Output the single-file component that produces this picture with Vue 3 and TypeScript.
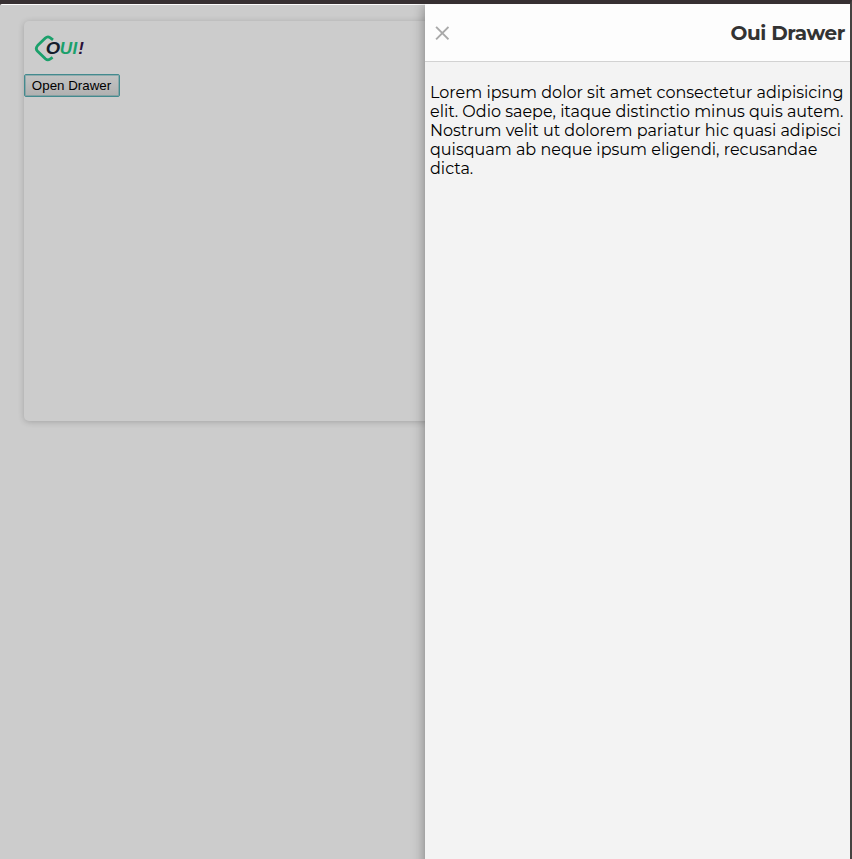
<script setup lang="ts">
import { ref } from 'vue'

const open = ref<boolean>(true)
const title: string = 'Oui Drawer'
const lines: string[] = [
  'Lorem ipsum dolor sit amet consectetur adipisicing',
  'elit. Odio saepe, itaque distinctio minus quis autem.',
  'Nostrum velit ut dolorem pariatur hic quasi adipisci',
  'quisquam ab neque ipsum eligendi, recusandae',
  'dicta.',
]
</script>

<template>
  <div class="window">
    <main class="page">
      <section class="card">
        <svg class="logo" width="54" height="28" viewBox="0 0 54 28">
          <path
            d="M19 5.8 L16 3.6 Q13.6 2 11.4 4 L3.6 11.6 Q1 14.4 3.6 17.2 L11.4 24.8 Q13.6 26.8 16 25.2 L18.6 23.4"
            fill="none"
            stroke="#1ba06b"
            stroke-width="2.8"
          />
          <text class="mark" x="11.8" y="20.2" textLength="14.4" lengthAdjust="spacingAndGlyphs" fill="#141d2b">O</text>
          <text class="mark" x="25.8" y="20.2" textLength="12.4" lengthAdjust="spacingAndGlyphs" fill="#1ba06b">U</text>
          <text class="mark" x="38.6" y="20.2" fill="#1ba06b">I</text>
          <text class="mark" x="44.2" y="20.2" fill="#2a0f38">!</text>
        </svg>
        <button class="trigger" @click="open = true">Open Drawer</button>
      </section>
    </main>
    <div v-if="open" class="overlay" @click.self="open = false">
      <aside class="drawer">
        <header class="head">
          <button class="close" aria-label="Close" @click="open = false">
            <svg width="14" height="14" viewBox="0 0 14 14">
              <path d="M1.1 0.9 L13.5 13.3 M13.5 0.9 L1.1 13.3" stroke="#a9a9a9" stroke-width="1.9" />
            </svg>
          </button>
          <h1 class="title">{{ title }}</h1>
        </header>
        <p class="body">
          <span v-for="(line, i) in lines" :key="i" class="line">{{ line }}</span>
        </p>
      </aside>
    </div>
  </div>
</template>

<style>
body {
  margin: 0;
  background: #373032;
}
</style>

<style scoped>
.window {
  position: relative;
  box-sizing: border-box;
  height: 859px;
  overflow: hidden;
  border-top: 4px solid #373032;
  border-right: 2px solid #454240;
}
.page {
  box-sizing: border-box;
  height: 855px;
  padding: 16px 24px;
  background: #cccccc;
  border-top: 1px solid #fcfcfc;
  border-top-left-radius: 2px;
}
.card {
  box-sizing: border-box;
  display: flex;
  flex-direction: column;
  align-items: flex-start;
  height: 400px;
  padding-top: 13px;
  border-radius: 5px;
  box-shadow: 0 1px 6px rgba(0, 0, 0, 0.2);
}
.logo {
  display: block;
  margin-left: 10px;
}
.mark {
  font: italic 700 17px 'Liberation Sans', sans-serif;
}
.trigger {
  box-sizing: border-box;
  width: 96px;
  height: 23px;
  margin-top: 12px;
  padding: 0 1px 0 0;
  border: 1px solid #438a8e;
  box-shadow: inset 0 0 0 1px rgba(67, 138, 142, 0.4);
  border-radius: 2px;
  background: linear-gradient(#c4c4c4, #b0b0b0);
  color: #000;
  font: 13.33px/18px 'Liberation Sans', Arial, sans-serif;
  white-space: nowrap;
}
.overlay {
  position: absolute;
  inset: 0 0 -20px;
  display: flex;
  justify-content: flex-end;
}
.drawer {
  width: 425px;
  background: #f3f3f3;
  box-shadow: 0 2px 12px rgba(0, 0, 0, 0.4);
}
.head {
  box-sizing: border-box;
  display: flex;
  align-items: center;
  justify-content: space-between;
  height: 58px;
  padding: 0 5px 0 10px;
  background: #fdfdfd;
  border-bottom: 1px solid #d2d2d2;
}
.close {
  display: flex;
  padding: 0;
  border: 0;
  background: none;
}
.title {
  margin: 0;
  color: #333;
  font: 700 20px/24px Montserrat, 'Open Sans', sans-serif;
  letter-spacing: -0.4px;
}
.body {
  margin: 21px 0 0 5px;
  color: #000;
  font: 16px/19px Montserrat, 'Open Sans', sans-serif;
}
.line {
  display: block;
  width: max-content;
  white-space: nowrap;
}
</style>
